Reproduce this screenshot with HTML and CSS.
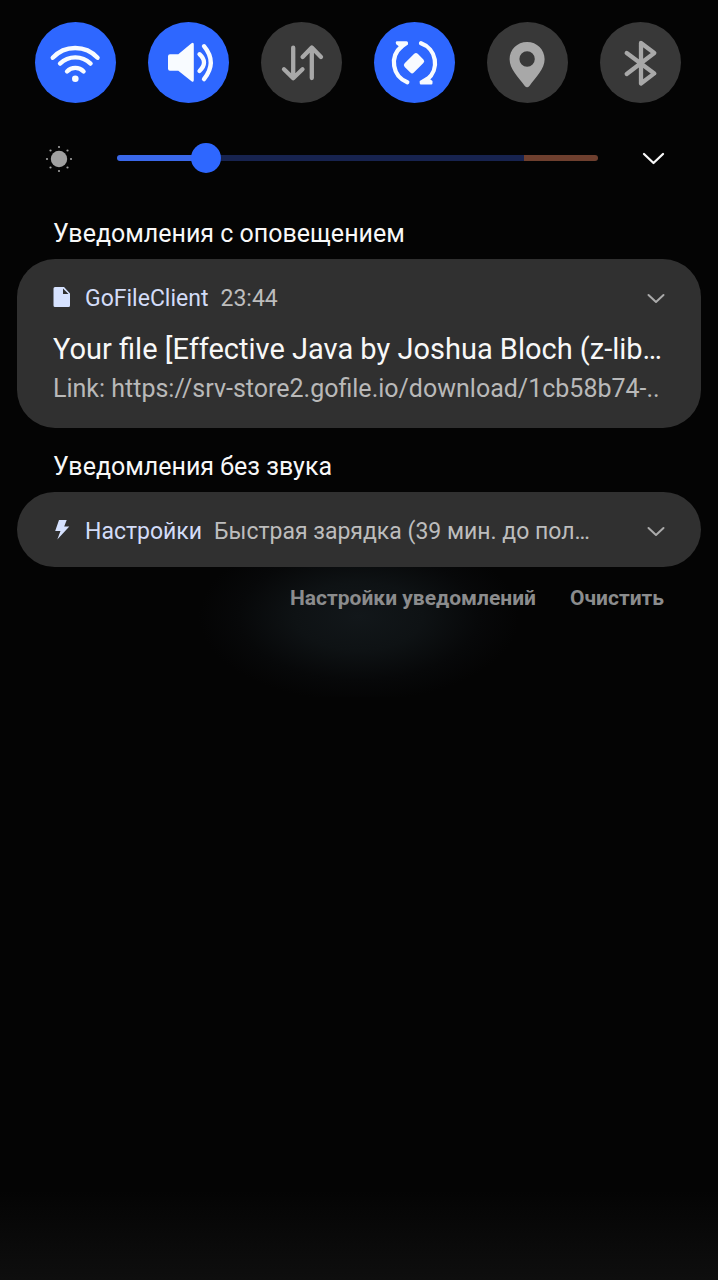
FILE: index.html
```html
<!DOCTYPE html>
<html lang="ru">
<head>
<meta charset="utf-8">
<meta name="viewport" content="width=device-width, initial-scale=1">
<title>Панель уведомлений</title>
<link rel="stylesheet" href="styles.css">
</head>
<body>
<main class="shade">
  <div class="toggles">
    <button class="toggle toggle-on" aria-label="Wi-Fi" aria-pressed="true">
      <svg class="toggle-icon" viewBox="0 0 81 81">
        <g class="line"><path d="M17.7 35.8A30.6 30.6 0 0 1 62.6 35.8M25 41.6A22 22 0 0 1 55.6 41.6M32 49.4A11.5 11.5 0 0 1 48.6 49.4"/></g>
        <circle class="solid" cx="40.3" cy="56.7" r="3.3"/>
      </svg>
    </button>
    <button class="toggle toggle-on" aria-label="Звук" aria-pressed="true">
      <svg class="toggle-icon" viewBox="0 0 81 81">
        <path class="solid" d="M22 32.3H30.3L43.5 21.2Q45.8 19.7 45.8 22.5V58Q45.8 60.8 43.5 59.2L30.3 48.7H22Q20 48.7 20 46.7V34.3Q20 32.3 22 32.3Z"/>
        <g class="line"><path d="M51.5 32.2Q60.5 40.5 51.5 49M56 24.2Q69.5 40.5 56 57.2"/></g>
      </svg>
    </button>
    <button class="toggle" aria-label="Мобильные данные" aria-pressed="false">
      <svg class="toggle-icon" viewBox="0 0 81 81">
        <g class="line"><path d="M32.2 25.7V56M23 47.3L32.2 56.2L41.5 47.3M50.8 56V25.7M41.6 35L50.8 25.5L60 35"/></g>
      </svg>
    </button>
    <button class="toggle toggle-on" aria-label="Автоповорот" aria-pressed="true">
      <svg class="toggle-icon" viewBox="0 0 81 81">
        <g class="line"><path d="M33.3 60.2A21 21 0 0 1 27.5 24.5M47 21.3A21 21 0 0 1 53.2 57.5"/></g>
        <path class="solid" d="M23 19.2H32.5Q34 19.2 34 20.7V22.5L28 26.8L22.2 22.3Q21 19.2 23 19.2ZM57.3 62.5H47Q45.7 62.5 45.7 61V59L52.7 54.8L58.5 59V61.2Q58.5 62.5 57.3 62.5Z"/>
        <rect class="solid" x="30.8" y="34.7" width="18.5" height="13" rx="2.5" transform="rotate(-45 40 41.2)"/>
      </svg>
    </button>
    <button class="toggle" aria-label="Геолокация" aria-pressed="false">
      <svg class="toggle-icon" viewBox="0 0 81 81">
        <path class="solid" fill-rule="evenodd" d="M40.1 20C30.2 20 22.6 27.6 22.6 37.3C22.6 47 31 54.5 37.8 64Q40.1 66.7 42.4 64C49.2 54.5 57.6 47 57.6 37.3C57.6 27.6 50 20 40.1 20ZM40.1 29.3A7.7 7.7 0 1 1 40.1 44.7A7.7 7.7 0 1 1 40.1 29.3Z"/>
      </svg>
    </button>
    <button class="toggle" aria-label="Bluetooth" aria-pressed="false">
      <svg class="toggle-icon" viewBox="0 0 81 81">
        <g class="line"><path d="M26.7 31L54.3 51.4L41 61.5V21L54.3 31L26.7 52"/></g>
      </svg>
    </button>
  </div>

  <div class="brightness">
    <svg class="sun" viewBox="0 0 28 28">
      <circle cx="14" cy="15" r="8.2"/>
      <circle cx="14" cy="3" r="1.1"/><circle cx="14" cy="27" r="1.1"/>
      <circle cx="2" cy="15" r="1.1"/><circle cx="26" cy="15" r="1.1"/>
      <circle cx="5.5" cy="6.5" r="1.1"/><circle cx="22.5" cy="6.5" r="1.1"/>
      <circle cx="5.5" cy="23.5" r="1.1"/><circle cx="22.5" cy="23.5" r="1.1"/>
    </svg>
    <input class="slider" type="range" min="0" max="1000" value="163" aria-label="Яркость">
    <button class="expand" aria-label="Развернуть">
      <svg class="chevron-large" viewBox="0 0 24 14"><path d="M3 3L12.5 12L22 3"/></svg>
    </button>
  </div>

  <section class="group">
    <h2 class="heading">Уведомления с оповещением</h2>
    <article class="card card-tall">
      <div class="card-head">
        <svg class="app-icon" viewBox="0 0 20 24"><path d="M2 0H11L17 6.5V18.5Q17 20 15.5 20H2Q0.5 20 0.5 18.5V1.5Q0.5 0 2 0ZM10 1.5V7H15.5Z" fill-rule="evenodd"/></svg>
        <span class="app">GoFileClient</span>
        <time class="meta">23:44</time>
        <button class="expand" aria-label="Развернуть">
          <svg class="chevron" viewBox="0 0 18 12"><path d="M1.5 2L9 9L16.5 2"/></svg>
        </button>
      </div>
      <h3 class="title">Your file [Effective Java by Joshua Bloch (z-lib…</h3>
      <p class="body-text">Link: https://srv-store2.gofile.io/download/1cb58b74-..</p>
    </article>
  </section>

  <section class="group group-silent">
    <h2 class="heading">Уведомления без звука</h2>
    <article class="card card-short">
      <div class="card-head">
        <svg class="app-icon" viewBox="0 0 20 24"><path d="M6 0H13.7L11.2 6.5H16.3L4.3 19.5L7.5 11H2.2Z"/></svg>
        <span class="app">Настройки</span>
        <span class="meta">Быстрая зарядка (39 мин. до пол…</span>
        <button class="expand" aria-label="Развернуть">
          <svg class="chevron" viewBox="0 0 18 12"><path d="M1.5 2L9 9L16.5 2"/></svg>
        </button>
      </div>
    </article>
  </section>

  <footer class="actions">
    <button class="action">Настройки уведомлений</button>
    <button class="action">Очистить</button>
  </footer>
</main>
</body>
</html>
```

FILE: styles.css
```css
* {
  box-sizing: border-box;
}

body {
  margin: 0;
  background: #040404;
  color: #f8f8f8;
  font-family: Roboto, "Noto Sans", sans-serif;
}

button {
  padding: 0;
  border: 0;
  background: none;
  color: inherit;
  font: inherit;
}

h2, h3, p {
  margin: 0;
  font-weight: 400;
}

.shade {
  min-height: 100vh;
  padding: 22px 17px;
  background: linear-gradient(to top, #0e0e0e, #040404 90px);
}

.toggles {
  display: flex;
  justify-content: space-between;
  padding: 0 20px 0 18px;
}

.toggle {
  width: 81px;
  height: 81px;
  border-radius: 50%;
  background: #383838;
  color: #a8a8a8;
}

.toggle-on {
  background: #2e67ff;
  color: #f8fbff;
}

.toggle-icon {
  display: block;
  width: 100%;
}

.line {
  fill: none;
  stroke: currentColor;
  stroke-width: 4.3;
  stroke-linecap: round;
  stroke-linejoin: round;
}

.solid {
  fill: currentColor;
}

.brightness {
  display: flex;
  align-items: center;
  height: 30px;
  margin: 40px 36px 0 28px;
}

.sun {
  width: 28px;
  margin-right: 44px;
  fill: #a0a0a0;
  overflow: visible;
}

.slider {
  flex: 1;
  min-width: 0;
  height: 30px;
  margin: 0 43px 0 0;
  appearance: none;
  background: none;
}

.slider::-webkit-slider-runnable-track {
  height: 6px;
  border-radius: 3px;
  background: linear-gradient(to right, #3a68ea 18%, #17234f 18% 84.6%, #6e3f2e 84.6%);
}

.slider::-webkit-slider-thumb {
  appearance: none;
  width: 30px;
  height: 30px;
  margin-top: -12px;
  border-radius: 50%;
  background: #2e67ff;
}

.expand {
  display: flex;
  margin-left: auto;
}

.chevron-large,
.chevron {
  fill: none;
  stroke: #f8f8f8;
  stroke-width: 2.3;
  stroke-linecap: round;
  stroke-linejoin: round;
}

.chevron-large {
  width: 24px;
}

.chevron {
  width: 18px;
  stroke: #aaaaaa;
  stroke-width: 2;
}

.group {
  margin-top: 45px;
}

.group-silent {
  margin-top: 23px;
}

.heading {
  padding: 0 36px;
  font-size: 25px;
  line-height: 32px;
}

.card {
  margin-top: 9px;
  padding: 0 36px;
  border-radius: 38px;
  background: #303030;
}

.card-tall {
  padding-top: 24px;
  padding-bottom: 21px;
}

.card-short {
  padding-top: 24px;
  padding-bottom: 19px;
}

.card-head {
  display: flex;
  align-items: center;
  font-size: 23px;
  line-height: 32px;
  white-space: nowrap;
}

.app-icon {
  width: 20px;
  margin-right: 12px;
  fill: #d6e2ff;
}

.app {
  margin-right: 12px;
  color: #d3dcf8;
}

.meta {
  color: #bdbdbd;
}

.title,
.body-text {
  overflow: hidden;
  white-space: nowrap;
}

.title {
  margin-top: 14px;
  font-size: 29px;
  line-height: 40px;
}

.body-text {
  margin-top: 2px;
  color: #b9b9b9;
  font-size: 25px;
  line-height: 36px;
}

.actions {
  display: flex;
  justify-content: flex-end;
  gap: 34px;
  height: 130px;
  padding: 17px 37px 0;
  background: radial-gradient(ellipse 160px 85px at 50% 38%, #12171a, #0e1214 40%, #070809 75%, transparent);
}

.action {
  align-self: flex-start;
  color: #8b8c8d;
  font-size: 21px;
  font-weight: 700;
  line-height: 28px;
}
```
